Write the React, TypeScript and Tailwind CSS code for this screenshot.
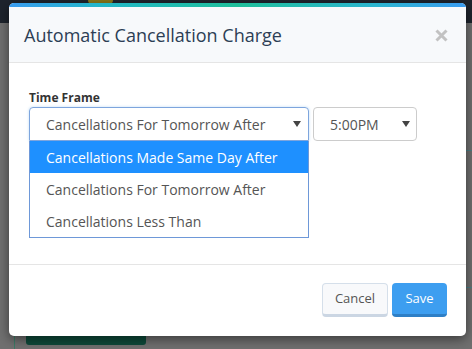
import React from "react";

function Caret() {
  return (
    <svg width="8" height="6" viewBox="0 0 8 6" className="shrink-0">
      <path d="M0 0 L8 0 L4 6 Z" fill="#444" />
    </svg>
  );
}

export default function App() {
  return (
    <div
      className="relative w-[472px] h-[349px] overflow-hidden bg-[#707070]"
      style={{ fontFamily: '"Open Sans", "Noto Sans", sans-serif' }}
    >
      {/* background page */}
      <div className="h-[23px] bg-[#1e242d] flex items-start">
        <div className="ml-[88px] w-[25px] h-[4px] rounded-b-full bg-[#8a7a1a]" />
      </div>
      <div className="absolute left-[440px] top-[150px] w-[32px] h-px bg-[#4d7f86]" />
      <div className="absolute left-[440px] top-[287px] w-[32px] h-px bg-[#4d7f86]" />
      <div className="absolute left-[14px] top-[335px] w-px h-[14px] bg-[#3d7a66]" />
      <div className="absolute left-[26px] top-[330px] w-[120px] h-[15px] rounded-[3px] bg-[#0d4a3a]" />

      {/* modal */}
      <div className="absolute left-[9px] top-[3px] w-[457px] h-[333px] bg-white rounded-[5px] overflow-hidden shadow-[0_3px_12px_rgba(0,0,0,0.5)] flex flex-col">
        <div className="h-[4px] bg-[linear-gradient(to_right,#3a9cf0,#22b7c8_20%,#1fbf9a_50%,#2bb5cf_80%,#3a9cf0)]" />
        <div className="h-[56px] bg-[#f7f9fb] border-b border-[#e5e5e5] flex items-center justify-between pl-[15px] pr-[18px]">
          <span className="text-[18px] text-[#2c3e55] leading-none mt-[1px]">
            Automatic Cancellation Charge
          </span>
          <svg width="13" height="13" viewBox="0 0 13 13" className="mt-[2px]">
            <path d="M1.5 1.5 L11.5 11.5 M11.5 1.5 L1.5 11.5" stroke="#c2c2c2" strokeWidth="3" />
          </svg>
        </div>
        <div className="h-[202px] border-b border-[#e5e5e5] pl-[20px] pt-[29px]">
          <div className="text-[12px] font-bold text-[#333] leading-none mb-[3px]">Time Frame</div>
          <div className="flex gap-[4px]">
            <div className="relative w-[280px]">
              <div className="h-[34px] rounded-t-[4px] border border-[#7ea5dd] flex items-center justify-between pl-[16px] pr-[7px] shadow-[0_0_3px_rgba(102,175,233,0.4)]">
                <span className="text-[14px] text-[#555]">Cancellations For Tomorrow After</span>
                <Caret />
              </div>
              <div className="absolute left-0 top-[34px] w-[280px] bg-white border border-t-0 border-[#6e98d8]">
                <div className="h-[32px] bg-[#1e90ff] text-white text-[14px] flex items-center pl-[16px]">
                  Cancellations Made Same Day After
                </div>
                <div className="h-[32px] text-[#555] text-[14px] flex items-center pl-[16px]">
                  Cancellations For Tomorrow After
                </div>
                <div className="h-[32px] text-[#555] text-[14px] flex items-center pl-[16px]">
                  Cancellations Less Than
                </div>
              </div>
            </div>
            <div className="w-[104px] h-[34px] rounded-[4px] border border-[#ccc] flex items-center justify-between pl-[16px] pr-[6px]">
              <span className="text-[14px] text-[#555]">5:00PM</span>
              <Caret />
            </div>
          </div>
        </div>
        <div className="flex-1 flex justify-end items-start pt-[18px] pr-[19px] gap-[4px]">
          <button className="w-[66px] h-[34px] rounded-[4px] bg-[#f8f9fb] border border-[#d5dfea] border-b-[3px] border-b-[#cbd6e3] text-[13px] text-[#555]">
            Cancel
          </button>
          <button className="w-[55px] h-[34px] rounded-[4px] bg-[#3d9ef0] border-b-[3px] border-b-[#2e7fc6] text-[13px] text-white">
            Save
          </button>
        </div>
      </div>
    </div>
  );
}
